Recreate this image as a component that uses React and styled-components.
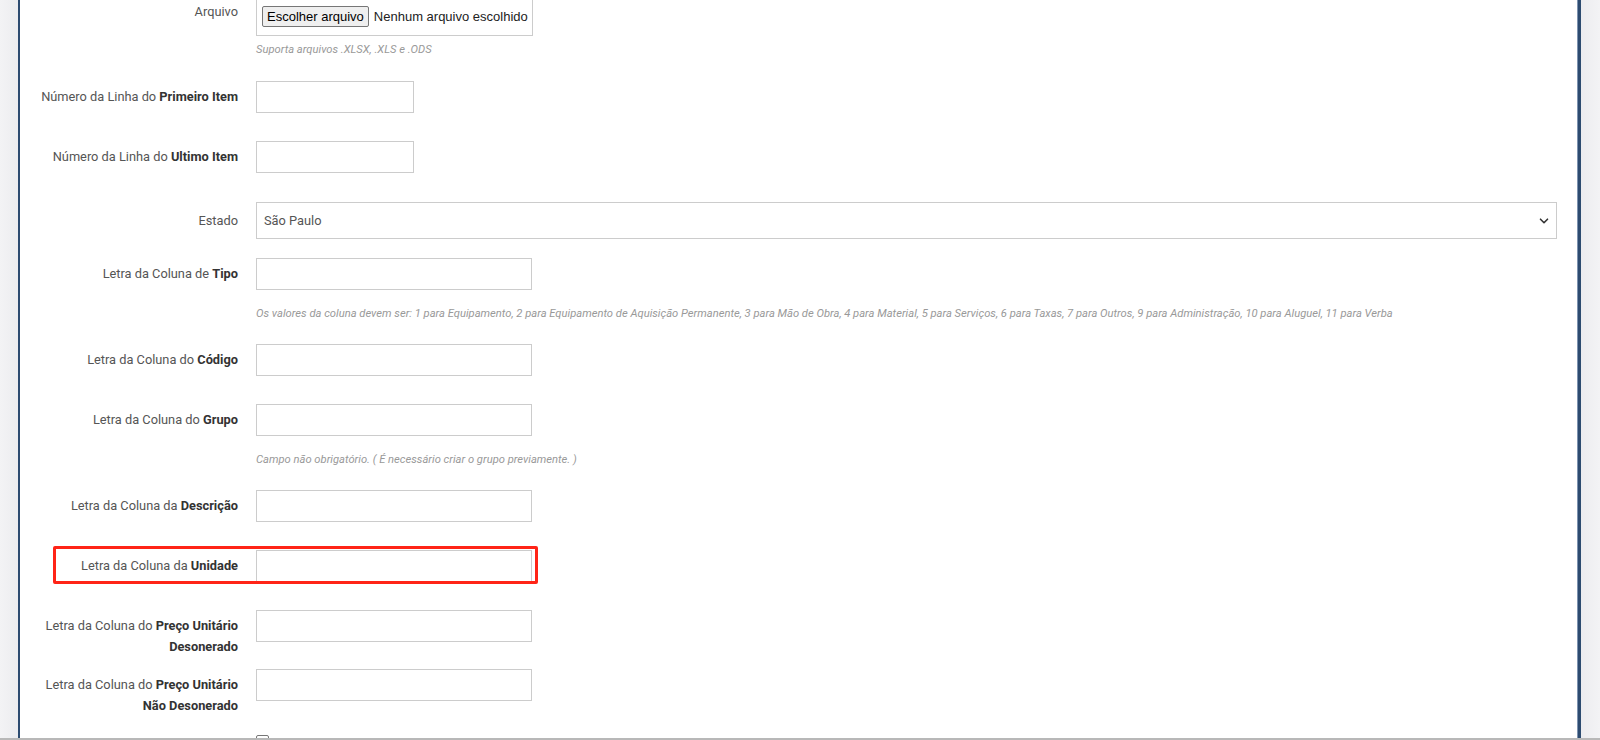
import styled, { createGlobalStyle } from "styled-components";

const GlobalStyle = createGlobalStyle`
  html, body {
    margin: 0;
    padding: 0;
    overflow: hidden;
    background: #ffffff;
    font-family: Roboto, "Liberation Sans", Arial, sans-serif;
  }
`;

const Page = styled.div`
  height: 740px;
  display: flex;
  flex-direction: column;
  overflow: hidden;
`;

const Viewport = styled.div`
  flex: 1;
  min-height: 0;
  display: flex;
  overflow: hidden;
`;

const Gutter = styled.div`
  width: ${(props) => props.$width || "18px"};
  flex-shrink: 0;
  background: linear-gradient(
    ${(props) => (props.$side === "left" ? "to right" : "to left")},
    #f3f3f5,
    #ececef
  );
`;

const Panel = styled.div`
  flex: 1;
  min-width: 0;
  background: #ffffff;
  border-left: 2px solid #2d4b70;
  border-right: 3px solid #2d4b70;
  box-shadow: inset -1px 0 0 #7d93b0;
  padding-right: 21px;
  overflow: hidden;
`;

const Form = styled.form`
  margin-top: -4px;
`;

const FormGroup = styled.div`
  position: relative;
  display: flex;
  align-items: flex-start;
  margin-bottom: ${(props) => props.$spacing || "28px"};

  ${(props) =>
    props.$highlighted &&
    `
    &::after {
      content: "";
      position: absolute;
      left: 33px;
      top: -4px;
      width: 479px;
      height: 32px;
      border: 3px solid #ff2417;
      border-radius: 2px;
      pointer-events: none;
    }
  `}
`;

const Label = styled.label`
  width: 236px;
  flex-shrink: 0;
  box-sizing: border-box;
  padding: ${(props) => props.$paddingTop || "5px"} 18px 0 0;
  text-align: right;
  font-size: 12.8px;
  line-height: 21px;
  color: #555555;
  white-space: nowrap;

  b {
    font-weight: 700;
    color: #333333;
  }
`;

const Field = styled.div`
  flex: 1;
  min-width: 0;
  display: flex;
  flex-direction: column;
`;

const TextInput = styled.input`
  box-sizing: border-box;
  width: ${(props) => props.$width || "276px"};
  height: 32px;
  border: 1px solid #cccccc;
  border-radius: 0;
  padding: 0 8px;
  font-family: inherit;
  font-size: 12px;
  color: #555555;
  background: #ffffff;
  outline: none;
`;

const FileBox = styled.div`
  box-sizing: border-box;
  width: 277px;
  height: 40px;
  border: 1px solid #cccccc;
  padding: 0 5px;
  display: flex;
  align-items: center;
  gap: 5px;
  font-family: "Liberation Sans", Arial, sans-serif;
  font-size: 13px;
  color: #222222;
  white-space: nowrap;
`;

const FileButton = styled.button`
  height: 21px;
  padding: 0 4px;
  border: 1px solid #767676;
  border-radius: 2px;
  background: #efefef;
  font-family: inherit;
  font-size: 13px;
  color: #000000;
`;

const Hint = styled.p`
  margin: ${(props) => props.$margin || "17px 0 0 0"};
  font-size: 11.2px;
  line-height: 14px;
  font-style: italic;
  color: #999999;
  white-space: nowrap;
`;

const SelectBox = styled.div`
  box-sizing: border-box;
  width: 100%;
  height: 37px;
  border: 1px solid #cccccc;
  display: flex;
  align-items: center;
  justify-content: space-between;
  padding: 0 7px 0 7px;
  font-size: 12.8px;
  color: #555555;
`;

const Chevron = styled.svg`
  width: 10px;
  height: 10px;
  color: #333333;
`;

const Checkbox = styled.span`
  display: inline-block;
  width: 13px;
  height: 13px;
  margin-top: 5px;
  box-sizing: border-box;
  border: 1px solid #767676;
  border-radius: 2px;
  background: #ffffff;
`;

const BottomBar = styled.div`
  height: 2px;
  flex-shrink: 0;
  background: #b8b8b8;
`;

const columnRows = [
  { pre: "Letra da Coluna do ", bold: "Código" },
  { pre: "Letra da Coluna do ", bold: "Grupo", hint: "Campo não obrigatório. ( É necessário criar o grupo previamente. )" },
  { pre: "Letra da Coluna da ", bold: "Descrição" },
  { pre: "Letra da Coluna da ", bold: "Unidade", highlighted: true },
];

export default function App() {
  return (
    <Page>
      <GlobalStyle />
      <Viewport>
        <Gutter $side="left" $width="18px" />
        <Panel>
          <Form onSubmit={(e) => e.preventDefault()}>
            <FormGroup $spacing="24px">
              <Label $paddingTop="5px">Arquivo</Label>
              <Field>
                <FileBox>
                  <FileButton type="button">Escolher arquivo</FileButton>
                  <span>Nenhum arquivo escolhido</span>
                </FileBox>
                <Hint $margin="7px 0 0 0">Suporta arquivos .XLSX, .XLS e .ODS</Hint>
              </Field>
            </FormGroup>

            <FormGroup>
              <Label>
                Número da Linha do <b>Primeiro Item</b>
              </Label>
              <Field>
                <TextInput $width="158px" />
              </Field>
            </FormGroup>

            <FormGroup $spacing="29px">
              <Label>
                Número da Linha do <b>Ultimo Item</b>
              </Label>
              <Field>
                <TextInput $width="158px" />
              </Field>
            </FormGroup>

            <FormGroup $spacing="19px">
              <Label $paddingTop="8px">Estado</Label>
              <Field>
                <SelectBox>
                  <span>São Paulo</span>
                  <Chevron viewBox="0 0 10 10" fill="none">
                    <path d="M1.5 3.2 5 6.7 8.5 3.2" stroke="currentColor" strokeWidth="1.6" strokeLinecap="round" strokeLinejoin="round" />
                  </Chevron>
                </SelectBox>
              </Field>
            </FormGroup>

            <FormGroup $spacing="23px">
              <Label>
                Letra da Coluna de <b>Tipo</b>
              </Label>
              <Field>
                <TextInput />
                <Hint>
                  Os valores da coluna devem ser: 1 para Equipamento, 2 para Equipamento de Aquisição Permanente, 3 para Mão de Obra, 4 para Material, 5 para Serviços, 6 para Taxas, 7 para Outros, 9 para Administração, 10 para Aluguel, 11 para Verba
                </Hint>
              </Field>
            </FormGroup>

            {columnRows.map((row) => (
              <FormGroup
                key={row.bold}
                $highlighted={row.highlighted}
                $spacing={row.hint ? "23px" : "28px"}
              >
                <Label>
                  {row.pre}
                  <b>{row.bold}</b>
                </Label>
                <Field>
                  <TextInput />
                  {row.hint && <Hint>{row.hint}</Hint>}
                </Field>
              </FormGroup>
            ))}

            <FormGroup $spacing="12px">
              <Label>
                Letra da Coluna do <b>Preço Unitário</b>
                <br />
                <b>Desonerado</b>
              </Label>
              <Field>
                <TextInput />
              </Field>
            </FormGroup>

            <FormGroup $spacing="14px">
              <Label>
                Letra da Coluna do <b>Preço Unitário</b>
                <br />
                <b>Não Desonerado</b>
              </Label>
              <Field>
                <TextInput />
              </Field>
            </FormGroup>

            <FormGroup>
              <Label />
              <Field>
                <Checkbox />
              </Field>
            </FormGroup>
          </Form>
        </Panel>
        <Gutter $side="right" $width="19px" />
      </Viewport>
      <BottomBar />
    </Page>
  );
}
